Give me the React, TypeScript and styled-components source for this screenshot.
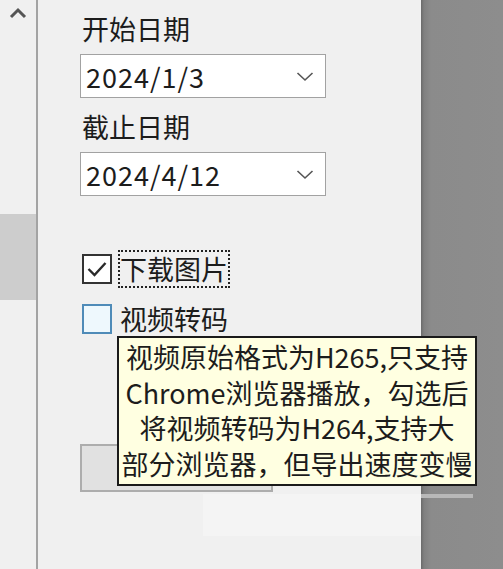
import React from "react";
import styled, { createGlobalStyle } from "styled-components";

const GlobalStyle = createGlobalStyle`
    html, body {
        margin: 0;
        padding: 0;
        background: #f0f0f0;
    }

    body {
        font-family: "Noto Sans CJK SC", "Noto Sans", sans-serif;
        color: #1a1a1a;
    }
`;

const Window = styled.div`
    position: relative;
    display: flex;
    width: 503px;
    height: 569px;
    overflow: hidden;
    background: #f0f0f0;
`;

const ScrollRail = styled.div`
    width: 36px;
    border-right: 2px solid #a3a3a3;
    display: flex;
    flex-direction: column;
    align-items: stretch;
`;

const ScrollArrow = styled.div`
    height: 28px;
    display: flex;
    justify-content: center;
    padding-top: 7px;
    box-sizing: border-box;
`;

const ScrollThumb = styled.div`
    height: 86px;
    margin-top: 186px;
    background: #cdcdcd;
`;

const Main = styled.div`
    flex: 1;
    padding: 11px 0 0 42px;
    display: flex;
    flex-direction: column;
`;

const SidePane = styled.div`
    width: 82px;
    background: linear-gradient(to right, #6a6a6a 0, #808080 3px, #8b8b8b 10px, #8d8d8d 100%);
`;

const FieldGroup = styled.div`
    display: flex;
    flex-direction: column;
    gap: 11px;
`;

const Field = styled.div`
    display: flex;
    flex-direction: column;
`;

const FieldLabel = styled.div`
    font-size: 27px;
    line-height: 36px;
    height: 36px;
    margin: 0 0 7px 2px;
    color: #1c1c1c;
`;

const Select = styled.div`
    box-sizing: border-box;
    width: 246px;
    height: 44px;
    background: #ffffff;
    border: 1px solid #a2a2a2;
    display: flex;
    align-items: center;
    justify-content: space-between;
    padding: 0 11px 0 5px;
    font-size: 27px;
    letter-spacing: 1px;
    color: #1c1c1c;
`;

const Checks = styled.div`
    display: flex;
    flex-direction: column;
    gap: 12px;
    margin-top: 54px;
`;

const CheckRow = styled.div`
    display: flex;
    align-items: center;
    height: 38px;
    padding-left: 2px;
`;

const Box = styled.div<{ $hover?: boolean }>`
    box-sizing: border-box;
    width: 30px;
    height: 30px;
    border: 2px solid ${(p) => (p.$hover ? "#4f8bb8" : "#333333")};
    background: ${(p) => (p.$hover ? "#eef8fd" : "#ffffff")};
    display: flex;
    align-items: center;
    justify-content: center;
    margin-right: 7px;
`;

const CheckLabel = styled.span<{ $focused?: boolean }>`
    font-size: 27px;
    line-height: 36px;
    padding: 0 1px;
    outline: ${(p) => (p.$focused ? "2px dotted #222" : "none")};
    outline-offset: -1px;
    color: #1c1c1c;
`;

const ActionButton = styled.div`
    box-sizing: border-box;
    width: 193px;
    height: 48px;
    margin-top: 106px;
    background: #e1e1e1;
    border: 2px solid #adadad;
`;

const Tooltip = styled.div`
    position: absolute;
    left: 117px;
    top: 336px;
    width: 360px;
    height: 150px;
    box-sizing: border-box;
    background: #ffffe1;
    border: 2px solid #1a1a1a;
    padding: 1px 0 0;
    font-size: 27px;
    line-height: 35.5px;
    white-space: nowrap;
    text-align: center;
    color: #1c1c1c;
    z-index: 2;
`;

const TooltipShadow = styled.div`
    position: absolute;
    left: 203px;
    top: 494px;
    width: 218px;
    height: 42px;
    background: rgba(255, 255, 255, 0.3);
    z-index: 1;
`;

const ShadowEdge = styled.div`
    position: absolute;
    left: 421px;
    top: 494px;
    width: 52px;
    height: 4px;
    background: #b8b8b8;
    z-index: 1;
`;

const Chevron: React.FC<{ up?: boolean }> = ({ up }) =>
    up ? (
        <svg width="18" height="12" viewBox="0 0 18 12">
            <path d="M2 10 L9 3 L16 10" fill="none" stroke="#555" strokeWidth="3" />
        </svg>
    ) : (
        <svg width="18" height="11" viewBox="0 0 18 11">
            <path d="M1.5 2 L9 9 L16.5 2" fill="none" stroke="#555" strokeWidth="1.6" />
        </svg>
    );

const CheckMark = () => (
    <svg width="22" height="18" viewBox="0 0 22 18">
        <path d="M2.5 9 L8.5 15 L19.5 3" fill="none" stroke="#2a2a2a" strokeWidth="2.4" />
    </svg>
);

const App: React.FC = () => {
    return (
        <>
            <GlobalStyle />
            <Window>
                <ScrollRail>
                    <ScrollArrow>
                        <Chevron up />
                    </ScrollArrow>
                    <ScrollThumb />
                </ScrollRail>
                <Main>
                    <FieldGroup>
                        <Field>
                            <FieldLabel>开始日期</FieldLabel>
                            <Select>
                                <span>2024/1/3</span>
                                <Chevron />
                            </Select>
                        </Field>
                        <Field>
                            <FieldLabel>截止日期</FieldLabel>
                            <Select>
                                <span>2024/4/12</span>
                                <Chevron />
                            </Select>
                        </Field>
                    </FieldGroup>
                    <Checks>
                        <CheckRow>
                            <Box>
                                <CheckMark />
                            </Box>
                            <CheckLabel $focused>下载图片</CheckLabel>
                        </CheckRow>
                        <CheckRow>
                            <Box $hover />
                            <CheckLabel>视频转码</CheckLabel>
                        </CheckRow>
                    </Checks>
                    <ActionButton />
                </Main>
                <SidePane />
                <Tooltip>
                    视频原始格式为H265,只支持
                    <br />
                    Chrome浏览器播放，勾选后
                    <br />
                    将视频转码为H264,支持大
                    <br />
                    部分浏览器，但导出速度变慢
                </Tooltip>
                <TooltipShadow />
                <ShadowEdge />
            </Window>
        </>
    );
};

export default App;
